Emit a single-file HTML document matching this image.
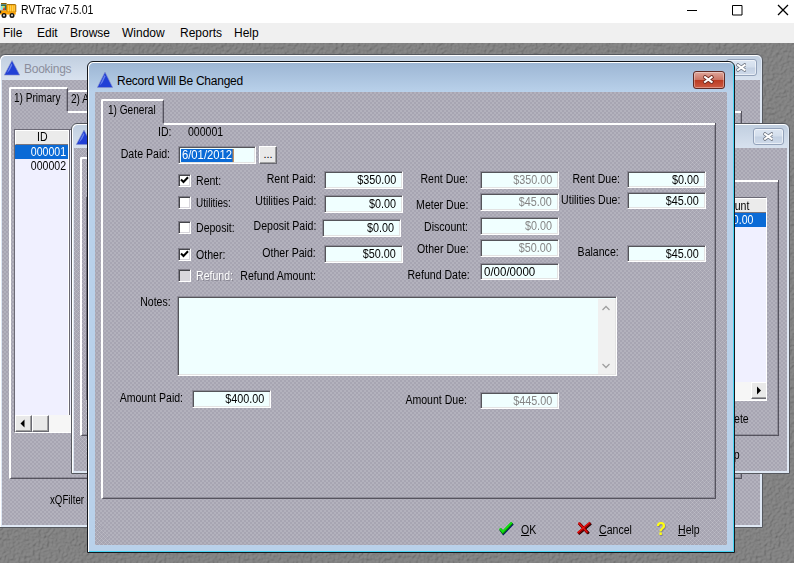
<!DOCTYPE html>
<html><head><meta charset="utf-8"><title>RVTrac v7.5.01</title>
<style>
*{box-sizing:border-box;margin:0;padding:0}
html,body{width:794px;height:563px;overflow:hidden;background:#fff}
body{position:relative;font-family:"Liberation Sans",sans-serif;font-size:12px;color:#000}
.abs{position:absolute}
#titlebar{position:absolute;left:0;top:0;width:794px;height:23px;background:#fff}
#titlebar .t{position:absolute;left:21px;top:3px;font-size:12px;line-height:14px;white-space:nowrap;transform:scaleX(.875);transform-origin:0 50%}
#menubar{position:absolute;left:0;top:23px;width:794px;height:20px;background:#f0f0f0}
#menubar span{position:absolute;top:3px;font-size:12px;line-height:14px;white-space:nowrap}
#mdi{position:absolute;left:0;top:43px;width:794px;height:520px;background:#7c7c7c;overflow:hidden}
.tex{background-color:#a7a5b2;background-image:repeating-linear-gradient(45deg,rgba(255,255,255,.14) 0,rgba(255,255,255,.14) .7071px,transparent .7071px,transparent 2.8284px),repeating-linear-gradient(-45deg,rgba(255,255,255,.14) 0,rgba(255,255,255,.14) .7071px,transparent .7071px,transparent 2.8284px)}
.win{position:absolute;border:1px solid #5a6b80;border-radius:6px 6px 0 0;background:#c3d5ea}
.win .cap{position:absolute;left:1px;top:1px;right:1px;height:29px;border-radius:5px 5px 0 0}
.win .ttl{position:absolute;font-size:12px;line-height:14px;white-space:nowrap;letter-spacing:-.25px}
.win .body{position:absolute;overflow:hidden}
.lbl{position:absolute;white-space:nowrap;line-height:14px;font-size:12px;transform:scaleX(.88);transform-origin:0 50%}
.lbl.r{transform-origin:100% 50%}
.lbl.dist{color:#fff;text-shadow:1px 1px 0 #85838f}
.fld{position:absolute;background:#f0ffff;border:1px solid;border-color:#8e8c98 #fff #fff #8e8c98;box-shadow:inset 1px 1px 0 #55555a,inset -1px -1px 0 #e3e3e3;font-size:12px;line-height:14px;text-align:right;padding:1px 6px 0 3px;white-space:nowrap;overflow:hidden}
.fld span{display:inline-block;transform:scaleX(.9);transform-origin:100% 50%}
.fld.l{text-align:left}
.fld.l span{transform-origin:0 50%;transform:scaleX(.96)}
.fld.dis{color:#858585}
.fld .sel{background:#0a6ad6;color:#fff;padding:0 1px;line-height:13px;border-right:1px solid #ff8c1a}
.cb{position:absolute;width:13px;height:13px;background:#fff;border:1px solid;border-color:#7d7b86 #fff #fff #7d7b86;box-shadow:inset 1px 1px 0 #45454a,inset -1px -1px 0 #d8d6dc}
.cb.dis{background:#d9d7dc}
.cb svg{position:absolute;left:1px;top:1px}
.btn3d svg{display:block}
.btn3d{position:absolute;background:#e9e9e9;border:1px solid;border-color:#fff #6a6a72 #6a6a72 #fff;box-shadow:inset -1px -1px 0 #a0a0a0;text-align:center;font-size:11px;line-height:14px}
.pg{position:absolute;border-left:2px solid #fff;border-right:1px solid #55535e;border-bottom:1px solid #55535e;box-shadow:inset -1px -1px 0 #8e8c98}
.hl{position:absolute;height:2px;background:#fff}
.tb{position:absolute;border-top:2px solid #fff;border-left:2px solid #fff;border-right:1px solid #55535e;border-radius:2px 1px 0 0;box-shadow:inset -1px 0 0 #8e8c98}
.tb.bk{border-left:0}
.vsb{position:absolute;right:1px;top:2px;bottom:1px;width:17px;background:#f0f0f0}
.qm{font-weight:bold;font-size:19px;line-height:20px;color:#ffff10;text-shadow:1px 1px 0 #85838f;transform:scaleX(.86);transform-origin:0 50%}
u{text-decoration:underline}
.cbtn{position:absolute;border-radius:3px;border:1px solid;text-align:center}
.cbtn svg{position:absolute;left:50%;top:50%;margin:-5px 0 0 -5.7px}
.cbtn.in{border-color:#93a2ba;background:linear-gradient(#dde6f2 0,#d3deec 48%,#c3d0e2 52%,#cfdaea 100%);box-shadow:inset 0 0 0 1px rgba(255,255,255,.55)}
.cbtn.ac{border-color:#5e2a24;background:linear-gradient(#dfa79c 0,#cc7564 48%,#ba3b22 52%,#cd5b43 100%);box-shadow:inset 0 0 0 1px rgba(255,255,255,.35)}
.list{position:absolute;background:#f0f0ff;border:1px solid;border-color:#6b6975 #fff #fff #6b6975;overflow:hidden}
.list .hdr{position:absolute;background:#ebebeb;border:1px solid;border-color:#fff #77757f #77757f #fff}
.list .row{position:absolute;left:0;height:14px}
.list .selrow{background:#0a6ad6;color:#fff}
.list .colsep{position:absolute;top:0;bottom:17px;width:2px;border-left:1px solid #fff;border-right:1px solid #6a6872}
.list .hsb{position:absolute;background:#f6f6f6}
</style></head><body>
<div id="titlebar"><svg class="abs" style="left:0;top:0" width="18" height="20" viewBox="0 0 18 20">
<rect x="1" y="3" width="5.6" height="1.3" fill="#8a5a00"/>
<rect x="6.8" y="4.2" width="8" height="0.9" fill="#6e6e6e"/>
<rect x="0.8" y="4.3" width="5.6" height="6.2" fill="#2f6f62"/>
<rect x="1" y="6" width="2" height="4" fill="#7fe9ee"/>
<rect x="2.4" y="6" width="2.4" height="1.6" fill="#f6e23a"/>
<rect x="3" y="7.5" width="1.4" height="1.2" fill="#f2b48a"/>
<rect x="2.8" y="8.6" width="2.2" height="1.6" fill="#f0301a"/>
<rect x="6.6" y="4.6" width="9.2" height="7.6" rx="0.6" fill="#ffb000" stroke="#a86a00" stroke-width="0.9"/>
<path d="M8.4 5.4V11.4M10.4 5.4V11.4M12.4 5.4V11.4M14.2 5.4V11.4" stroke="#ffe08a" stroke-width="0.7"/>
<path d="M0 10.4 H6.6 V12.2 H15.8 V14.6 H0 Z" fill="#ffa200"/>
<rect x="0" y="10.6" width="1.2" height="2.6" fill="#2a2a2a"/>
<circle cx="4" cy="15.4" r="2.5" fill="#111"/><circle cx="4" cy="15.4" r="1.1" fill="#cfcfcf"/>
<circle cx="12" cy="15.4" r="2.5" fill="#111"/><circle cx="12" cy="15.4" r="1.1" fill="#cfcfcf"/>
</svg><span class="t">RVTrac v7.5.01</span>
<svg class="abs" style="left:684px;top:0" width="110" height="22" viewBox="0 0 110 22"><path d="M3 10.5 H13 M48.5 5.5 H58 V15 H48.5 Z" fill="none" stroke="#000" stroke-width="1"/><path d="M94 5 L104 15 M104 5 L94 15" fill="none" stroke="#000" stroke-width="1.3"/></svg></div>
<div id="menubar"><span style="left:3px">File</span><span style="left:37px">Edit</span><span style="left:70px">Browse</span><span style="left:122px">Window</span><span style="left:180px">Reports</span><span style="left:234px">Help</span></div>
<div id="mdi">
<svg class="abs" style="left:0;top:0" width="794" height="520"><filter id="nz" x="0" y="0" width="100%" height="100%"><feTurbulence type="fractalNoise" baseFrequency="0.35" numOctaves="2" seed="3" result="n"/><feDiffuseLighting in="n" surfaceScale="1.1" diffuseConstant="1" lighting-color="#8a8a8a"><feDistantLight azimuth="225" elevation="62"/></feDiffuseLighting></filter><rect width="794" height="520" filter="url(#nz)"/></svg>
<!-- Bookings window (inactive) -->
<div class="win" id="w1" style="left:-1px;top:11px;width:764px;height:474px;background:#dfe8f4;border-color:#55585e;box-shadow:inset 1px 1px 0 #fff">
  <div class="cap" style="background:linear-gradient(#c1cfe0,#dde6f2)"></div>
  <svg class="abs" style="left:4px;top:5px" width="16" height="16" viewBox="0 0 16 15"><polygon points="8,0 15.7,14.6 0.3,14.6" fill="#2140d6" stroke="#8d96c9" stroke-width=".6"/><path d="M7.6 3 Q4 9.5 3 12.8 Q6.5 9.5 8.4 4.5 Z" fill="#7f96f0" opacity=".75"/></svg>
  <span class="ttl" style="left:24px;top:7px;color:#8b8e9c">Bookings</span>
  <div class="cbtn in" style="left:726px;top:4px;width:31px;height:17px"><svg width="10.6" height="9" viewBox="0 0 13 11"><path d="M2.5 2.6 L10.5 8.4 M10.5 2.6 L2.5 8.4" fill="none" stroke="#6d7480" stroke-width="4.4" stroke-linecap="square"/><path d="M2.5 2.6 L10.5 8.4 M10.5 2.6 L2.5 8.4" fill="none" stroke="#fff" stroke-width="2.6" stroke-linecap="square"/></svg></div>
  <div class="body tex" id="w1b" style="left:2px;top:25px;width:758px;height:445px">
<div class="pg" style="left:7px;top:31px;width:733px;height:368px"></div>
<div class="hl" style="left:66px;top:31px;width:673px"></div>
<div class="tb fr" style="left:7px;top:7px;width:59px;height:24px"><span class="lbl" style="transform:scaleX(.84);left:3px;top:2px">1) Primary</span></div>
<div class="tb bk" style="left:66px;top:10px;width:62px;height:21px"><span class="lbl" style="transform:scaleX(.84);left:2.700000000000003px;top:0px">2) Additional</span></div>
<div class="list" style="left:12px;top:49px;width:300px;height:304px"><div class="hdr" style="left:0;top:0;width:55px;height:15px"><span class="lbl" style="left:21px;top:-1px">ID</span></div><div class="hdr" style="left:56px;top:0;width:120px;height:15px"></div><div class="row selrow" style="top:15px;width:54px"><span class="lbl r" style="right:3px;top:0">000001</span></div><div class="row" style="top:29px;width:54px"><span class="lbl r" style="right:3px;top:0">000002</span></div><div class="colsep" style="left:53px"></div><div class="hsb" style="left:0;top:285px;width:300px;height:17px"><div class="btn3d" style="left:0;top:0;width:17px;height:17px"><svg width="15" height="15" viewBox="0 0 15 15"><polygon points="8.5,3.5 8.5,11.5 4.5,7.5" fill="#000"/></svg></div><div class="btn3d" style="left:17px;top:0;width:17px;height:17px"></div></div></div>
<span class="lbl" style="left:48px;top:413px;transform:scaleX(.81)">xQFilter</span>
  </div>
</div>
<!-- Middle window (inactive) -->
<div class="win" id="w2" style="left:71px;top:80px;width:719px;height:351px;background:#dfe8f4;border-color:#55585e;box-shadow:inset 1px 1px 0 #fff">
  <div class="cap" style="background:linear-gradient(#c1cfe0,#dde6f2)"></div>
  <svg class="abs" style="left:4px;top:6px" width="16" height="15" viewBox="0 0 16 15"><polygon points="8,0 15.7,14.6 0.3,14.6" fill="#2140d6" stroke="#8d96c9" stroke-width=".6"/><path d="M7.6 3 Q4 9.5 3 12.8 Q6.5 9.5 8.4 4.5 Z" fill="#7f96f0" opacity=".75"/></svg>
  <div class="cbtn in" style="left:681px;top:4px;width:31px;height:17px"><svg width="10.6" height="9" viewBox="0 0 13 11"><path d="M2.5 2.6 L10.5 8.4 M10.5 2.6 L2.5 8.4" fill="none" stroke="#6d7480" stroke-width="4.4" stroke-linecap="square"/><path d="M2.5 2.6 L10.5 8.4 M10.5 2.6 L2.5 8.4" fill="none" stroke="#fff" stroke-width="2.6" stroke-linecap="square"/></svg></div>
  <div class="body tex" id="w2b" style="left:2px;top:24px;width:713px;height:323px">
<div class="pg" style="left:6px;top:32px;width:699px;height:256px"></div>
<div class="hl" style="left:66px;top:32px;width:638px"></div>
<div class="tb fr" style="left:6px;top:9px;width:60px;height:23px"></div>
<div class="list" style="left:12px;top:49px;width:681px;height:204px"><div class="hdr" style="left:0;top:0;width:681px;height:15px"><span class="lbl r" style="right:18px;top:0">Amount</span></div><div class="row selrow" style="top:15px;width:681px;height:14px"><span class="lbl r" style="right:15px;top:0">$400.00</span></div><div class="hsb" style="left:0;top:184px;width:681px;height:18px"><div class="btn3d" style="right:0;top:0;width:17px;height:17px"><svg width="15" height="15" viewBox="0 0 15 15"><polygon points="5,3.5 5,11.5 9,7.5" fill="#000"/></svg></div></div></div>
<span class="lbl r" style="right:38px;top:264px">Delete</span>
<span class="lbl r" style="right:47px;top:300px">Help</span>
  </div>
</div>
<!-- Active window -->
<div class="win" id="w3" style="left:87px;top:18px;width:648px;height:492px;background:#b9d1ea;border-color:#15181d;box-shadow:inset 1px 1px 0 #fff,inset -1px -1px 0 #45d4f4">
  <div class="cap" style="background:linear-gradient(#9db6d4,#b9d1ea)"></div>
  <svg class="abs" style="left:9px;top:10px" width="16" height="16" viewBox="0 0 16 16"><polygon points="8,0 15.7,15.5 0.3,15.5" fill="#2140d6" stroke="#8d96c9" stroke-width=".6"/><path d="M7.6 3 Q4 10 3 13.5 Q6.5 10 8.4 4.5 Z" fill="#7f96f0" opacity=".75"/></svg>
  <span class="ttl" style="left:29px;top:12px">Record Will Be Changed</span>
  <div class="cbtn ac" style="left:605px;top:9px;width:32px;height:18px"><svg width="10.6" height="9" viewBox="0 0 13 11"><path d="M2.5 2.6 L10.5 8.4 M10.5 2.6 L2.5 8.4" fill="none" stroke="#6e2a20" stroke-width="4.6" stroke-linecap="square"/><path d="M2.5 2.6 L10.5 8.4 M10.5 2.6 L2.5 8.4" fill="none" stroke="#fff" stroke-width="2.6" stroke-linecap="square"/></svg></div>
  <div class="body tex" id="w3b" style="left:7px;top:30px;width:632px;height:453px">
<div class="pg" style="left:6px;top:31px;width:615px;height:376px"></div>
<div class="hl" style="left:69px;top:31px;width:551px"></div>
<div class="tb fr" style="left:6px;top:7px;width:63px;height:24px"><span class="lbl" style="transform:scaleX(.84);left:4.5px;top:2px">1) General</span></div>
<span class="lbl " style="left:63px;top:33px;">ID:</span>
<span class="lbl " style="left:93px;top:33px;">000001</span>
<span class="lbl r " style="right:556.5px;top:55px;">Date Paid:</span>
<div class="fld l" style="left:83px;top:54px;width:78px;height:18px;padding-left:2px"><span class="sel" style="transform:scaleX(.94)">6/01/2012</span></div>
<div class="btn3d" style="left:164px;top:54px;width:18px;height:18px"><span>...</span></div>
<div class="cb" style="left:83px;top:82px"><svg width="9" height="9" viewBox="0 0 9 9"><path d="M1 3.5 L3.5 6 L8 1.2" fill="none" stroke="#000" stroke-width="2"/></svg></div>
<span class="lbl " style="left:101px;top:82px;">Rent:</span>
<div class="cb" style="left:83px;top:104px"></div>
<span class="lbl " style="left:101px;top:104px;transform:scaleX(.83)">Utilities:</span>
<div class="cb" style="left:83px;top:129px"></div>
<span class="lbl " style="left:101px;top:129px;">Deposit:</span>
<div class="cb" style="left:83px;top:156px"><svg width="9" height="9" viewBox="0 0 9 9"><path d="M1 3.5 L3.5 6 L8 1.2" fill="none" stroke="#000" stroke-width="2"/></svg></div>
<span class="lbl " style="left:101px;top:156px;">Other:</span>
<div class="cb dis" style="left:83px;top:177px"></div>
<span class="lbl dist" style="left:101px;top:177px;">Refund:</span>
<span class="lbl r " style="right:411px;top:80px;">Rent Paid:</span>
<span class="lbl r " style="right:411px;top:102px;">Utilities Paid:</span>
<span class="lbl r " style="right:411px;top:127px;">Deposit Paid:</span>
<span class="lbl r " style="right:411px;top:154px;">Other Paid:</span>
<span class="lbl r " style="right:411px;top:177px;">Refund Amount:</span>
<div class="fld" style="left:229px;top:79px;width:79px;height:18px"><span>$350.00</span></div>
<div class="fld" style="left:229px;top:103px;width:79px;height:18px"><span>$0.00</span></div>
<div class="fld" style="left:227px;top:127px;width:79px;height:18px"><span>$0.00</span></div>
<div class="fld" style="left:229px;top:153px;width:79px;height:18px"><span>$50.00</span></div>
<span class="lbl r " style="right:258.5px;top:80px;">Rent Due:</span>
<span class="lbl r " style="right:258.5px;top:106px;">Meter Due:</span>
<span class="lbl r " style="right:258.5px;top:128px;">Discount:</span>
<span class="lbl r " style="right:258.5px;top:150px;">Other Due:</span>
<span class="lbl r " style="right:257.5px;top:176px;">Refund Date:</span>
<div class="fld dis" style="left:385px;top:79px;width:79px;height:18px"><span>$350.00</span></div>
<div class="fld dis" style="left:385px;top:101px;width:79px;height:18px"><span>$45.00</span></div>
<div class="fld dis" style="left:385px;top:125px;width:79px;height:18px"><span>$0.00</span></div>
<div class="fld dis" style="left:385px;top:147px;width:79px;height:18px"><span>$50.00</span></div>
<div class="fld l" style="left:385px;top:171px;width:79px;height:17px"><span>0/00/0000</span></div>
<span class="lbl r " style="right:107px;top:80px;">Rent Due:</span>
<span class="lbl r " style="right:106.5px;top:101px;">Utilities Due:</span>
<span class="lbl r " style="right:108.5px;top:153px;">Balance:</span>
<div class="fld" style="left:532px;top:79px;width:79px;height:17px"><span>$0.00</span></div>
<div class="fld" style="left:532px;top:100px;width:79px;height:17px"><span>$45.00</span></div>
<div class="fld" style="left:532px;top:153px;width:79px;height:17px"><span>$45.00</span></div>
<span class="lbl r " style="right:556px;top:203px;">Notes:</span>
<div class="fld l" style="left:82px;top:204px;width:440px;height:80px;padding:0"><div class="vsb"><svg width="16" height="76" viewBox="0 0 16 76"><path d="M4.5 11 L8 7.5 L11.5 11 M4.5 65 L8 68.5 L11.5 65" fill="none" stroke="#a0a0a0" stroke-width="1.3"/></svg></div></div>
<span class="lbl r " style="right:543.5px;top:299px;">Amount Paid:</span>
<div class="fld" style="left:97px;top:298px;width:79px;height:18px"><span>$400.00</span></div>
<span class="lbl r " style="right:259.5px;top:301px;">Amount Due:</span>
<div class="fld dis" style="left:385px;top:300px;width:79px;height:17px"><span>$445.00</span></div>
<svg class="abs" style="left:401px;top:427px" width="20" height="20" viewBox="496 519 20 20"><path d="M500.6 529.6 L503.4 533.4 L512.8 523.6" fill="none" stroke="#00106e" stroke-width="2.6"/><path d="M500.2 529 L503 532.6 L512.2 522.9" fill="none" stroke="#0a7a0a" stroke-width="2.8"/><path d="M499.8 528.4 L502.7 531.8 L511.8 522.4" fill="none" stroke="#10e010" stroke-width="2"/></svg>
<span class="lbl " style="left:425.5px;top:431px;"><u>O</u>K</span>
<svg class="abs" style="left:479px;top:427px" width="20" height="20" viewBox="574 519 20 20"><path d="M579.4 523.6 L588.8 533.6 M591 523.4 L578.6 534" fill="none" stroke="#1a0000" stroke-width="2.6"/><path d="M578.8 523 L588 533 M590.4 522.8 L578 533.4" fill="none" stroke="#8a0000" stroke-width="2.8"/><path d="M578.4 522.6 L587.4 532.4 M589.8 522.4 L577.6 532.8" fill="none" stroke="#f01010" stroke-width="1.2"/></svg>
<span class="lbl " style="left:503.5px;top:431px;"><u>C</u>ancel</span>
<span class="abs qm" style="left:561px;top:427px">?</span>
<span class="lbl " style="left:582.5px;top:431px;"><u>H</u>elp</span>
  </div>
</div>
</div>
</body></html>
